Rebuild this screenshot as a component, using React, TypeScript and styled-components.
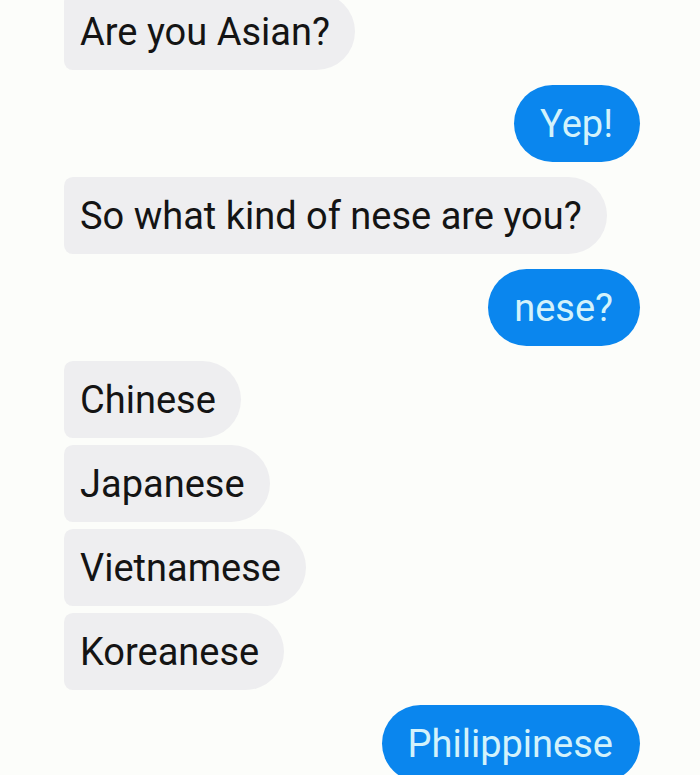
import React from "react";
import styled, { createGlobalStyle } from "styled-components";

const Global = createGlobalStyle`
  html, body {
    margin: 0;
    padding: 0;
    background: #fcfdfa;
    overflow: hidden;
  }
  body {
    font-family: Roboto, "Liberation Sans", Arial, sans-serif;
  }
`;

const Thread = styled.div`
  width: 700px;
  height: 775px;
  overflow: hidden;
  background: #fcfdfa;
`;

const List = styled.div`
  display: flex;
  flex-direction: column;
  gap: 15px;
  margin-top: -7px;
  padding: 0 60px 0 64px;
`;

const Group = styled.div<{ $mine?: boolean }>`
  display: flex;
  flex-direction: column;
  gap: 7px;
  align-items: ${(p) => (p.$mine ? "flex-end" : "flex-start")};
`;

const Bubble = styled.div<{ $mine?: boolean }>`
  box-sizing: border-box;
  height: 77px;
  padding: 17px ${(p) => (p.$mine ? "27px" : "25px")} 16px
    ${(p) => (p.$mine ? "26px" : "16px")};
  font-family: Roboto, "Liberation Sans", Arial, sans-serif;
  font-size: 38px;
  line-height: 44px;
  white-space: nowrap;
  color: ${(p) => (p.$mine ? "#d3f2fb" : "#141414")};
  background: ${(p) => (p.$mine ? "#0a86ee" : "#eeeef0")};
  border-radius: ${(p) => (p.$mine ? "39px" : "9px 39px 39px 9px")};
`;

type Msg = { mine: boolean; texts: string[] };

const messages: Msg[] = [
  { mine: false, texts: ["Are you Asian?"] },
  { mine: true, texts: ["Yep!"] },
  { mine: false, texts: ["So what kind of nese are you?"] },
  { mine: true, texts: ["nese?"] },
  { mine: false, texts: ["Chinese", "Japanese", "Vietnamese", "Koreanese"] },
  { mine: true, texts: ["Philippinese"] },
];

export default function App() {
  return (
    <>
      <Global />
      <Thread>
        <List>
          {messages.map((m, i) => (
            <Group key={i} $mine={m.mine}>
              {m.texts.map((t) => (
                <Bubble key={t} $mine={m.mine}>
                  {t}
                </Bubble>
              ))}
            </Group>
          ))}
        </List>
      </Thread>
    </>
  );
}
